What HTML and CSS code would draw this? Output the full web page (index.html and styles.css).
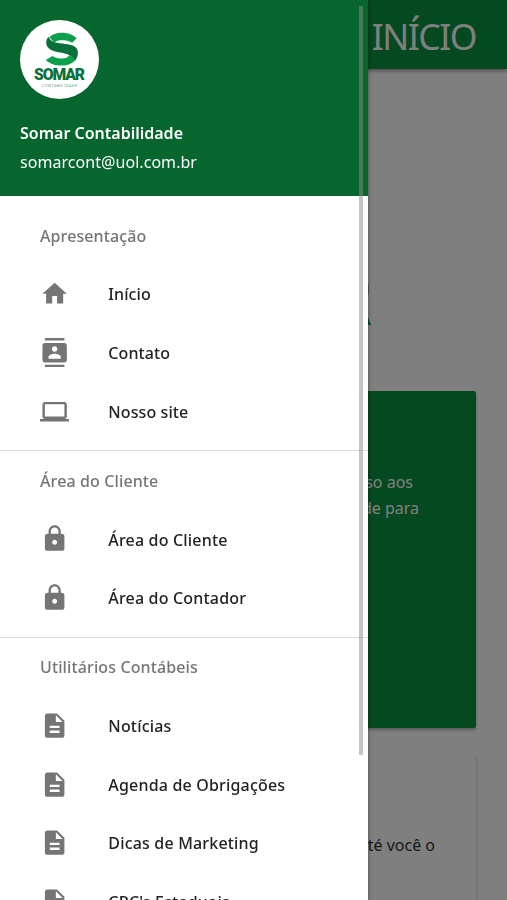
FILE: index.html
```html
<!DOCTYPE html>
<html lang="pt-BR">
<head>
<meta charset="utf-8">
<title>Somar Contabilidade</title>
<link rel="stylesheet" href="styles.css">
</head>
<body>
<svg class="defs" width="0" height="0">
  <symbol id="home" viewBox="0 0 24 24"><path d="M10 20v-6h4v6h5v-8h3L12 3 2 12h3v8z"/></symbol>
  <symbol id="contacts" viewBox="0 0 24 24"><path d="M20 0H4v2h16V0zM4 24h16v-2H4v2zM20 4H4c-1.100 0-2 .9-2 2v12c0 1.100.9 2 2 2h16c1.100 0 2-.9 2-2V6c0-1.100-.9-2-2-2zm-8 2.750c1.240 0 2.250 1.010 2.250 2.250s-1.010 2.250-2.250 2.250S9.750 10.240 9.750 9 10.760 6.750 12 6.750zM17 17H7v-1.500c0-1.670 3.330-2.500 5-2.500s5 .83 5 2.500V17z"/></symbol>
  <symbol id="laptop" viewBox="0 0 24 24"><path d="M20 18c1.100 0 1.990-.9 1.990-2L22 6c0-1.100-.9-2-2-2H4c-1.100 0-2 .9-2 2v10c0 1.100.9 2 2 2H0v2h24v-2h-4zM4 6h16v10H4V6z"/></symbol>
  <symbol id="lock" viewBox="0 0 24 24"><path d="M18 8h-1V6c0-2.760-2.240-5-5-5S7 3.240 7 6v2H6c-1.100 0-2 .9-2 2v10c0 1.100.9 2 2 2h12c1.100 0 2-.9 2-2V10c0-1.100-.9-2-2-2zm-6 9c-1.100 0-2-.9-2-2s.9-2 2-2 2 .9 2 2-.9 2-2 2zm3.100-9H8.900V6c0-1.710 1.390-3.100 3.100-3.100s3.100 1.390 3.100 3.100v2z"/></symbol>
  <symbol id="doc" viewBox="0 0 24 24"><path d="M14 2H6c-1.100 0-1.990.9-1.990 2L4 20c0 1.100.89 2 1.990 2H18c1.100 0 2-.9 2-2V8l-6-6zm2 16H8v-2h8v2zm0-4H8v-2h8v2zm-3-5V3.500L18.500 9H13z"/></symbol>
</svg>

<div class="page">
  <header class="topbar"><h1>INÍCIO</h1></header>
  <main>
    <div class="brand">
      <svg width="12" height="44" viewBox="0 0 12 44"><path fill="#4d6470" d="M0 2h9.500v11H0z"/><path fill="#009b68" d="M0 30h7l5 13H0z"/></svg>
    </div>
    <section class="card green"><p class="l1">acesso aos</p><p class="l2">de para</p></section>
    <section class="card plain"><p>até você o</p></section>
  </main>
</div>
<div class="overlay"></div>

<nav class="drawer">
  <div class="user">
    <svg class="avatar" viewBox="0 0 78 78">
      <circle cx="39" cy="39" r="39" fill="#fff"/>
      <path fill="#0da04b" d="M29 17C32 14 36 12.500 41 12.500C47 12.500 52 14 56 18L51.500 22.500C48 20.500 45 20 41 20C38 20 36 20.500 34 22.500Z"/>
      <path fill="#0da04b" d="M25.500 39.500L32 35.500C35 37.500 38 38 41.500 38C45 38 47.500 37 49 34.500L55 39C52 43 47 45 41 45C35 45 29.500 43.500 25.500 39.500Z"/>
      <path fill="#087139" d="M28.500 16.500C25.500 18.500 25 24 27.500 27C31 31.500 38 31.500 44 33C50 34.500 53 37 54.500 40C58 36 58 30 55 27C51 23.500 44 24 37 22.500C31.500 21.500 29 19.500 28.500 16.500Z"/>
      <text class="logo-name" x="39" y="59.500" textLength="50.500" lengthAdjust="spacing">SOMAR</text>
      <text class="logo-sub" x="39" y="66" textLength="35" lengthAdjust="spacing">CONTABILIDADE</text>
    </svg>
    <strong>Somar Contabilidade</strong>
    <span class="mail">somarcont@uol.com.br</span>
  </div>
  <ul>
    <li class="sub">Apresentação</li>
    <li><svg class="ico"><use href="#home"/></svg><span>Início</span></li>
    <li><svg class="ico"><use href="#contacts"/></svg><span>Contato</span></li>
    <li><svg class="ico"><use href="#laptop"/></svg><span>Nosso site</span></li>
  </ul>
  <ul>
    <li class="sub">Área do Cliente</li>
    <li><svg class="ico"><use href="#lock"/></svg><span>Área do Cliente</span></li>
    <li><svg class="ico"><use href="#lock"/></svg><span>Área do Contador</span></li>
  </ul>
  <ul>
    <li class="sub">Utilitários Contábeis</li>
    <li><svg class="ico"><use href="#doc"/></svg><span>Notícias</span></li>
    <li><svg class="ico"><use href="#doc"/></svg><span>Agenda de Obrigações</span></li>
    <li><svg class="ico"><use href="#doc"/></svg><span>Dicas de Marketing</span></li>
    <li><svg class="ico"><use href="#doc"/></svg><span>CRC's Estaduais</span></li>
  </ul>
  <div class="thumb"></div>
</nav>
</body>
</html>
```
FILE: styles.css
```css
* { box-sizing: border-box; }
body { margin: 0; height: 900px; overflow: hidden; background: #fff; font-family: "Noto Sans", "Open Sans", sans-serif; }
h1, p, ul { margin: 0; padding: 0; }
.defs { position: absolute; }

.page { height: 900px; overflow: hidden; }
.topbar { height: 69px; padding-right: 31px; background: #089240; box-shadow: 0 2px 4px rgba(0,0,0,.4); display: flex; align-items: center; justify-content: flex-end; }
.topbar h1 { font-size: 35.500px; font-weight: 400; letter-spacing: -1.500px; line-height: 69px; color: #fff; padding-top: 4px; }
.brand { height: 321px; padding: 213px 136px 0 0; display: flex; justify-content: flex-end; }
.card { margin: 0 31px 0 30px; border-radius: 2px; box-shadow: 0 2px 3px rgba(0,0,0,.3); font-size: 16px; line-height: 26px; text-align: right; }
.green { height: 337px; margin-top: 1px; padding-top: 78px; background: #089240; color: #fff; }
.green .l1 { padding-right: 63px; }
.green .l2 { padding-right: 57px; }
.plain { height: 200px; margin-top: 27px; padding: 77px 41px 0 0; color: #333; }

.overlay { position: fixed; inset: 0; background: rgba(0,0,0,.5); }

.drawer { position: fixed; top: 0; left: 0; width: 368px; height: 900px; overflow: hidden; background: #fff; box-shadow: 0 0 4px rgba(0,0,0,.45); }
.user { height: 196px; padding: 20px 20px 0; background: #07652e; color: #fff; display: flex; flex-direction: column; align-items: flex-start; }
.avatar { width: 79px; height: 79px; margin-bottom: 20px; }
.logo-name { font: 900 15.500px "Roboto", sans-serif; fill: #087139; text-anchor: middle; }
.logo-sub { font: 400 4px "Roboto", sans-serif; fill: #6aa785; text-anchor: middle; }
.user strong { font-size: 16px; font-weight: 600; line-height: 29.300px; }
.mail { font-size: 16px; line-height: 29.300px; letter-spacing: .05px; }
.drawer ul { list-style: none; padding-top: 10px; }
.drawer ul + ul { margin-top: 9.500px; padding-top: 0; border-top: 1px solid #dcdcdc; }
.drawer li { height: 58.670px; padding-left: 40px; display: flex; align-items: center; font-size: 16px; font-weight: 500; letter-spacing: .1px; color: #222; }
.drawer ul + ul li { letter-spacing: .18px; }
.drawer .sub { color: #757575; padding-top: 1px; }
.drawer ul + ul .sub { letter-spacing: .12px; }
.ico { width: 29.300px; height: 29.300px; margin-right: 39px; fill: #757575; }
.drawer li span { padding-top: 1px; }
.thumb { position: absolute; top: 6px; right: 5px; width: 4px; height: 749px; background: rgba(140,140,140,.5); }
```
